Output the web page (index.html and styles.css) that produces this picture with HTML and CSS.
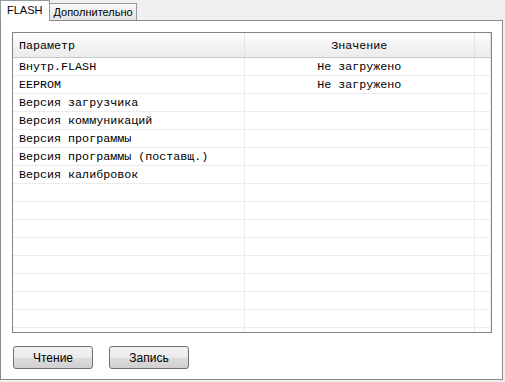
FILE: index.html
```html
<!DOCTYPE html>
<html lang="ru">
<head>
<meta charset="UTF-8">
<title>FLASH</title>
<link rel="stylesheet" href="styles.css">
</head>
<body>
<div class="tabs">
  <div class="tab active">FLASH</div>
  <div class="tab">Дополнительно</div>
</div>
<div class="pane">
  <div class="grid">
    <table>
      <colgroup><col class="c1"><col class="c2"><col class="c3"></colgroup>
      <thead>
        <tr><th class="left">Параметр</th><th>Значение</th><th></th></tr>
      </thead>
      <tbody>
        <tr><td>Внутр.FLASH</td><td class="val">Не загружено</td><td></td></tr>
        <tr><td>EEPROM</td><td class="val">Не загружено</td><td></td></tr>
        <tr><td>Версия загрузчика</td><td></td><td></td></tr>
        <tr><td>Версия коммуникаций</td><td></td><td></td></tr>
        <tr><td>Версия программы</td><td></td><td></td></tr>
        <tr><td>Версия программы (поставщ.)</td><td></td><td></td></tr>
        <tr><td>Версия калибровок</td><td></td><td></td></tr>
        <tr><td></td><td></td><td></td></tr>
        <tr><td></td><td></td><td></td></tr>
        <tr><td></td><td></td><td></td></tr>
        <tr><td></td><td></td><td></td></tr>
        <tr><td></td><td></td><td></td></tr>
        <tr><td></td><td></td><td></td></tr>
        <tr><td></td><td></td><td></td></tr>
        <tr><td></td><td></td><td></td></tr>
        <tr><td></td><td></td><td></td></tr>
      </tbody>
    </table>
  </div>
  <div class="buttons">
    <button>Чтение</button>
    <button>Запись</button>
  </div>
</div>
</body>
</html>
```
FILE: styles.css
```css
body { margin: 0; background: #f0f0f0; font-family: "Liberation Sans", Arial, sans-serif; font-size: 12px; color: #000;
       width: 503px; }
.tabs { display: flex; height: 20px; align-items: flex-end; font-size: 11px; }
.tab { height: 17px; line-height: 16px; padding: 0 3px; border: 1px solid #919b9c; border-bottom: none;
       background: linear-gradient(#f8f8f8, #e4e4e4); margin-left: -1px; box-sizing: border-box; }
.tab.active { height: 21px; line-height: 19px; background: #fff; margin-left: 0; padding: 0 7px 0 6px; position: relative;
              z-index: 1; margin-bottom: -1px; }
.pane { background: #fff; border: 1px solid #8b8b8b; height: 360px; box-sizing: border-box; padding: 11px 10px 0 11px; }
.grid { border: 1px solid #828282; height: 301px; overflow: hidden; box-sizing: border-box; }
table { border-collapse: collapse; width: 100%; table-layout: fixed;
        font-family: "Liberation Mono", "Courier New", monospace; font-size: 11.7px; }
col.c1 { width: 231px; }
col.c3 { width: 16px; }
th { height: 23px; font-weight: normal; background: linear-gradient(#ffffff, #f2f2f2 60%, #ebebeb);
     border-right: 1px solid #e2e2e2; border-bottom: 1px solid #c8c8c8; padding: 1px 6px 0; text-align: center; }
th.left { text-align: left; }
td { height: 16px; border-bottom: 1px solid #ececec; border-right: 1px solid #ececec; padding: 1px 6px 0;
     white-space: nowrap; overflow: hidden; }
td.val { text-align: center; }
.buttons { display: flex; gap: 16px; padding: 13px 0 0 1px; }
button { width: 80px; height: 23px; border: 1px solid #707070; border-radius: 3px; font: inherit;
         background: linear-gradient(#f2f2f2, #ebebeb 50%, #dddddd 51%, #cfcfcf); color: #000; padding: 0; }
```
